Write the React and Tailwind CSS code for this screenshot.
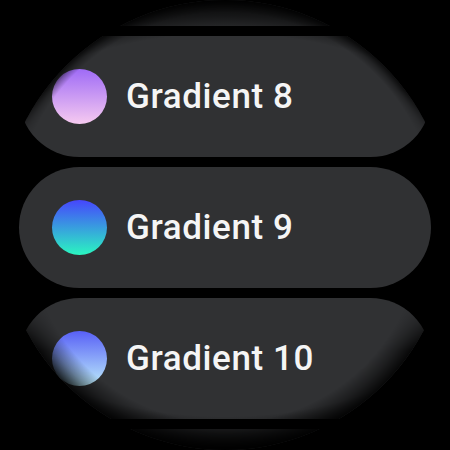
import React from "react";

const items = [
  { label: "Gradient 8", from: "#9f6bf6", to: "#f6caf0" },
  { label: "Gradient 9", from: "#4646fd", to: "#2af6c0" },
  { label: "Gradient 10", from: "#5860f6", to: "#bcecfb" },
];

function Chip({ label, from, to }) {
  return (
    <div className="flex h-[121px] w-[412px] shrink-0 items-center gap-[19px] rounded-full bg-[#303133] pl-[33px]">
      <div
        className="h-[55px] w-[55px] shrink-0 rounded-full"
        style={{ background: `linear-gradient(to bottom, ${from}, ${to})` }}
      />
      <span className="font-['Roboto',sans-serif] text-[35px] font-medium leading-none tracking-[0.6px] text-[#f5f5f5]">
        {label}
      </span>
    </div>
  );
}

function EmptyChip() {
  return <div className="h-[121px] w-[412px] shrink-0 rounded-full bg-[#303133]" />;
}

export default function App() {
  return (
    <div className="h-[450px] w-[450px] bg-black">
      <div className="relative h-[450px] w-[450px] overflow-hidden rounded-full bg-black">
        <div className="mt-[-95px] flex flex-col items-center gap-[10px]">
          <EmptyChip />
          {items.map((it) => (
            <Chip key={it.label} {...it} />
          ))}
          <EmptyChip />
        </div>
        <div className="pointer-events-none absolute inset-0 bg-[radial-gradient(ellipse_350px_225px_at_50%_50%,rgba(0,0,0,0)_85%,rgba(0,0,0,0.55)_93%,rgba(0,0,0,0.9)_100%)]" />
        <div className="pointer-events-none absolute inset-0 bg-[radial-gradient(circle_225px_at_50%_50%,rgba(0,0,0,0)_213px,rgba(0,0,0,0.3)_219px,rgba(0,0,0,0.75)_225px)] [mask-image:linear-gradient(to_bottom,black_0%,black_20%,transparent_32%,transparent_100%)]" />
        <div className="pointer-events-none absolute inset-0 bg-[radial-gradient(circle_225px_at_50%_50%,rgba(0,0,0,0)_198px,rgba(0,0,0,0.4)_212px,rgba(0,0,0,0.85)_225px)] [mask-image:linear-gradient(to_bottom,transparent_0%,transparent_66%,black_78%,black_100%)]" />
      </div>
    </div>
  );
}
